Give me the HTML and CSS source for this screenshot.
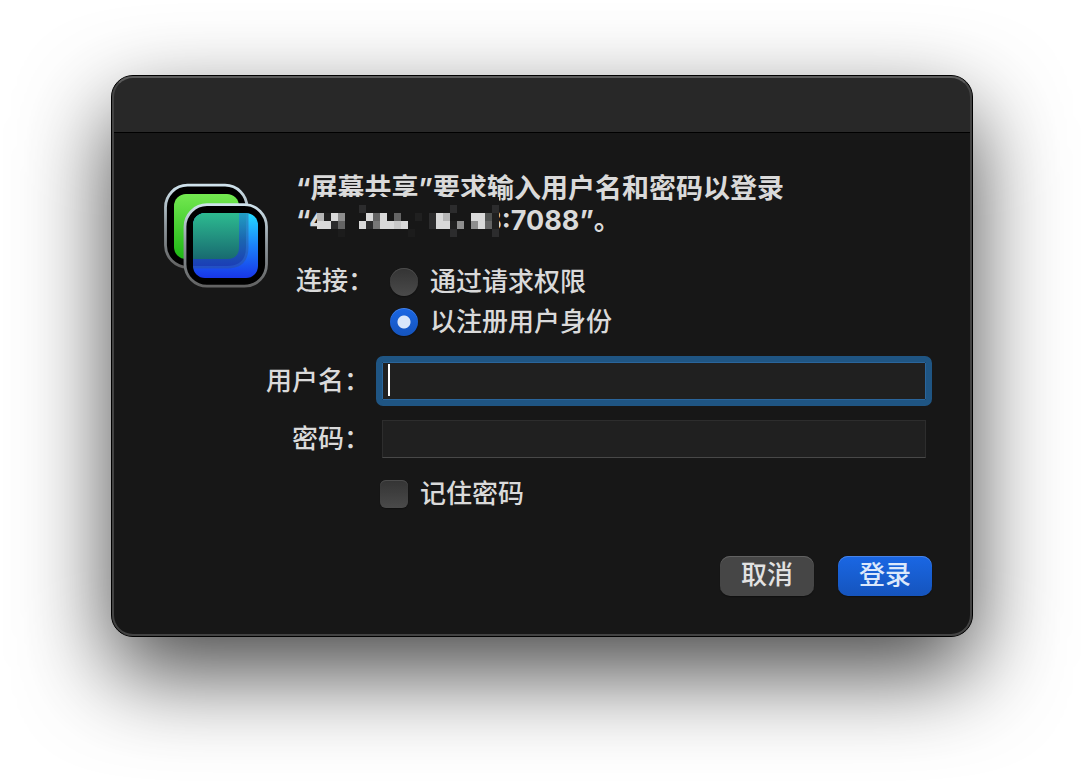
FILE: index.html
```html
<!DOCTYPE html>
<html lang="zh-CN">
<head>
<meta charset="utf-8">
<meta name="viewport" content="width=device-width, initial-scale=1">
<title>屏幕共享</title>
<link rel="stylesheet" href="styles.css">
</head>
<body>
<main class="dialog">
  <div class="titlebar"></div>
  <form class="content">
    <div class="intro">
      <svg class="app-icon" viewBox="164 183 104 105" aria-hidden="true">
        <defs>
          <linearGradient id="rim" x1="0" y1="0" x2="0" y2="1"><stop offset="0" stop-color="#cfe2ec"/><stop offset=".5" stop-color="#8e979d"/><stop offset="1" stop-color="#626262"/></linearGradient>
          <linearGradient id="green" x1="0" y1="0" x2="0" y2="1"><stop offset="0" stop-color="#73e850"/><stop offset="1" stop-color="#1db714"/></linearGradient>
          <linearGradient id="blue" x1="0" y1="0" x2="0" y2="1"><stop offset="0" stop-color="#25dcff"/><stop offset=".5" stop-color="#1b82fa"/><stop offset="1" stop-color="#1836e8"/></linearGradient>
          <linearGradient id="shade" x1="0" y1="0" x2="0" y2="1"><stop offset="0" stop-color="#219fc4"/><stop offset=".5" stop-color="#1b66b0"/><stop offset="1" stop-color="#1b3eb6"/></linearGradient>
          <linearGradient id="teal" x1="0" y1="0" x2="0" y2="1"><stop offset="0" stop-color="#2dbb90"/><stop offset="1" stop-color="#186a70"/></linearGradient>
          <clipPath id="screen"><rect x="193" y="213" width="65" height="65" rx="12"/></clipPath>
        </defs>
        <rect x="165.500" y="185.200" width="81.500" height="82" rx="22" fill="#000" stroke="url(#rim)" stroke-width="2.800"/>
        <rect x="174" y="194" width="65" height="65" rx="12" fill="url(#green)"/>
        <rect x="185" y="204.700" width="81.500" height="81.500" rx="22" fill="#000" stroke="url(#rim)" stroke-width="2.800"/>
        <g clip-path="url(#screen)">
          <rect x="193" y="213" width="65" height="65" fill="url(#blue)"/>
          <path d="M193 213h55.500v34q0 21.500-21.500 21.500h-34z" fill="#31518d" opacity=".45"/>
          <path d="M193 213h53v34q0 19-19 19h-34z" fill="url(#shade)"/>
          <path d="M193 213h46v34q0 12-12 12h-34z" fill="url(#teal)"/>
        </g>
      </svg>
      <div class="intro-text">
        <h1 class="message">“屏幕共享”要求输入用户名和密码以登录<br>“4<span class="address-gap"></span>8:7088”。
          <svg class="mosaic" viewBox="0 0 26 5" preserveAspectRatio="none" shape-rendering="crispEdges" aria-hidden="true">
            <path fill="#171717" d="M0 0h26v5H0z"/>
            <path fill="#2c2c2d" d="M6 1h1v1H6zM19 1h1v1h-1zM25 1h1v1h-1zM19 4h1v1h-1zM25 4h1v1h-1zM2 3h1v1H2zM7 3h1v1H7zM16 2h1v2h-1z"/>
            <path fill="#202020" d="M14 2h1v1h-1zM1 2h1v1H1zM19 3h1v1h-1zM25 2h1v2h-1z"/>
            <path fill="#1c1c1c" d="M3 4h1v1H3zM13 4h1v1h-1z"/>
            <path fill="#b6b6b6" d="M0 2h1v1H0zM18 2h1v1h-1z"/>
            <path fill="#d9d9d9" d="M2 2h1v1H2zM0 3h2v1H0zM7 2h1v1H7zM9 2h1v1H9zM6 3h1v1H6zM9 3h2v1H9zM12 3h1v1h-1zM17 2h1v2h-1zM18 3h1v1h-1zM22 2h2v1h-2zM23 3h1v1h-1z"/>
            <path fill="#c8c8c8" d="M11 3h1v1h-1z"/>
            <path fill="#8e8e8e" d="M3 2h1v1H3zM20 3h1v1h-1zM22 3h1v1h-1z"/>
            <path fill="#646464" d="M3 3h1v1H3zM8 2h1v1H8zM11 2h1v1h-1zM24 3h1v1h-1z"/>
            <path fill="#777" d="M8 3h1v1H8z"/>
            <path fill="#505251" d="M24 2h1v1h-1z"/>
          </svg>
        </h1>
        <div class="connection" role="radiogroup" aria-labelledby="connection-label">
          <span class="connection-label" id="connection-label">连接：</span>
          <div class="options">
            <label class="option"><input class="control radio" type="radio" name="connection">通过请求权限</label>
            <label class="option"><input class="control radio" type="radio" name="connection" checked>以注册用户身份</label>
          </div>
        </div>
      </div>
    </div>
    <div class="fields">
      <label class="field-label" for="username">用户名：</label>
      <div class="field"><input class="text-input active" id="username" type="text"><span class="caret"></span></div>
      <label class="field-label" for="password">密码：</label>
      <div class="field"><input class="text-input" id="password" type="password"></div>
    </div>
    <label class="option remember"><input class="control checkbox" type="checkbox">记住密码</label>
    <div class="actions">
      <button class="button" type="button">取消</button>
      <button class="button primary" type="button">登录</button>
    </div>
  </form>
</main>
</body>
</html>
```

FILE: styles.css
```css
* {
  box-sizing: border-box;
}

body {
  min-height: 100vh;
  margin: 0;
  padding: 75px 111px;
  background: #fff;
  color: #dadada;
  font: 500 26px/32px Inter, "Noto Sans CJK SC", sans-serif;
}

.dialog {
  position: relative;
  border: 1px solid #000;
  border-radius: 22px;
  background: #171717;
  box-shadow: 0 36px 90px rgba(0, 0, 0, 0.72);
}

.dialog::after {
  content: "";
  position: absolute;
  inset: 0;
  border: 2px solid #434343;
  border-top-color: #5c5c5c;
  border-radius: 21px;
  pointer-events: none;
}

.titlebar {
  height: 57px;
  border-bottom: 1px solid #000;
  border-radius: 21px 21px 0 0;
  background: #282828;
}

.content {
  padding: 39px 40px 40px 52px;
}

.intro {
  display: flex;
  gap: 28px;
}

.app-icon {
  flex: none;
  width: 104px;
  height: 105px;
  margin-top: 11px;
}

.intro-text {
  flex: 1;
}

.message {
  position: relative;
  margin: 0;
  padding-top: 1px;
  font-size: 27px;
  line-height: 32px;
  font-weight: 700;
}

.address-gap {
  display: inline-block;
  width: 157px;
}

.mosaic {
  position: absolute;
  left: 21px;
  top: 25px;
  width: 182px;
  height: 40px;
}

.connection {
  display: flex;
  margin-top: 25px;
}

.connection-label {
  width: 94px;
  line-height: 38px;
}

.option {
  display: flex;
  align-items: center;
  gap: 12px;
  height: 40px;
}

.control {
  appearance: none;
  flex: none;
  width: 28px;
  height: 28px;
  margin: 0;
  background: linear-gradient(#343434, #4a4a4a);
  box-shadow: inset 0 1px #4c4c4c, 0 1px 1px #101010;
}

.radio {
  border-radius: 50%;
}

.radio:checked {
  background: radial-gradient(circle, #d8e6fa 6px, transparent 7px), linear-gradient(#1a67e4, #1554bd);
  box-shadow: inset 0 1px #4783e8, 0 1px 1px #101010;
}

.checkbox {
  border-radius: 6px;
}

.fields {
  display: grid;
  grid-template-columns: 206px 1fr;
  gap: 20px 12px;
  align-items: center;
  margin-top: 20px;
  padding-right: 6px;
}

.field-label {
  text-align: right;
}

.field {
  position: relative;
  height: 38px;
}

.text-input {
  display: block;
  width: 100%;
  height: 38px;
  padding: 0 6px;
  border: 1px solid #2d2d2d;
  border-bottom-color: #484848;
  border-radius: 0;
  outline: none;
  background: #202020;
  color: #dadada;
  font: inherit;
}

.text-input.active {
  border-color: #2a659b;
  outline: 6px solid #1f5583;
  border-radius: 1px;
  caret-color: transparent;
}

.caret {
  position: absolute;
  left: 6px;
  top: 2px;
  width: 2px;
  height: 32px;
  background: #fff;
}

.remember {
  margin: 16px 0 0 216px;
}

.actions {
  display: flex;
  justify-content: flex-end;
  gap: 24px;
  margin-top: 42px;
}

.button {
  width: 94px;
  height: 40px;
  padding: 0 0 2px;
  border: 0;
  border-radius: 10px;
  background: #464646;
  box-shadow: inset 0 1px #626262, 0 1px 1px #101010;
  color: #e2e2e2;
  font: inherit;
}

.primary {
  background: linear-gradient(#1a67e4, #1554bd);
  box-shadow: inset 0 1px #4783e8, 0 1px 1px #101010;
  color: #dce8fb;
}
```
